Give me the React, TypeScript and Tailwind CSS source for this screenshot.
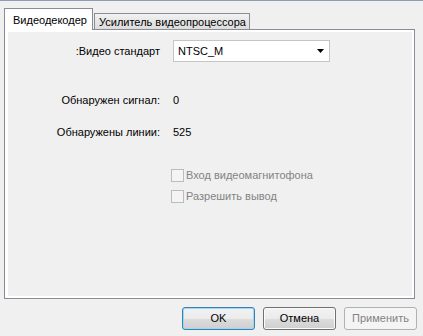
import React from 'react';

const font = { fontFamily: '"Liberation Sans", Arial, sans-serif' };

function CheckRow({ label, className }: { label: string; className?: string }) {
  return (
    <div className={`flex items-center h-[14px] pl-[163px] ${className || ''}`}>
      <span className="w-[13px] h-[13px] border border-[#bcbcbc] bg-[#f4f4f4] shrink-0" />
      <span className="ml-[2px] text-[#838383]">{label}</span>
    </div>
  );
}

export default function App() {
  return (
    <div className="w-[423px] h-[336px] bg-[#f0f0f0] border-t border-[#8e9bb0] text-[11px] leading-none text-black overflow-hidden whitespace-nowrap" style={font}>
      <div className="pt-[7px] pl-[4px]">
        {/* Tabs */}
        <div className="flex items-end h-[21px]">
          <div className="relative z-10 w-[89px] h-[22px] -mb-px bg-white border border-b-0 border-[#898c95] pl-[8px] pt-[6px]">
            Видеодекодер
          </div>
          <div className="w-[156px] h-[16px] ml-px bg-[linear-gradient(#f2f2f2,#e6e6e6_50%,#dcdcdc)] border border-b-0 border-[#898c95] pl-[4px] pt-[3px]">
            Усилитель видеопроцессора
          </div>
        </div>

        {/* Panel */}
        <div className="w-[411px] h-[270px] border border-[#898c95] bg-white pl-[3px] pt-[2px] pr-[2px] pb-[2px]">
          <div className="h-full bg-[#f0f0f0] flex flex-col">
            <div className="flex items-center mt-[8px] h-[22px]">
              <span className="w-[152px] text-right pt-[1px]">:Видео стандарт</span>
              <div className="ml-[13px] w-[157px] h-[22px] bg-white border border-[#c5c5c5] flex items-center justify-between pl-[4px] pr-[5px]">
                <span>NTSC_M</span>
                <svg width="7" height="4" viewBox="0 0 7 4">
                  <path d="M0 0h7L3.5 4z" fill="#000" />
                </svg>
              </div>
            </div>
            <div className="flex items-center mt-[30px] h-[16px]">
              <span className="w-[152px] text-right">Обнаружен сигнал:</span>
              <span className="ml-[13px]">0</span>
            </div>
            <div className="flex items-center mt-[16px] h-[16px]">
              <span className="w-[152px] text-right">Обнаружены линии:</span>
              <span className="ml-[13px]">525</span>
            </div>
            <CheckRow label="Вход видеомагнитофона" className="mt-[28px]" />
            <CheckRow label="Разрешить вывод" className="mt-[7px]" />
          </div>
        </div>
      </div>

      {/* Buttons */}
      <div className="flex justify-end gap-[8px] pr-[6px] mt-[8px]">
        <button className="w-[73px] h-[23px] rounded-[3px] border border-[#3c7fb1] shadow-[inset_0_0_0_1px_#9fd8f5] bg-[linear-gradient(#f2f2f2,#ebebeb_50%,#dddddd_50%,#cfcfcf)]">
          OK
        </button>
        <button className="w-[73px] h-[23px] rounded-[3px] border border-[#707070] shadow-[inset_0_0_0_1px_#fbfbfb] bg-[linear-gradient(#f2f2f2,#ebebeb_50%,#dddddd_50%,#cfcfcf)]">
          Отмена
        </button>
        <button className="w-[73px] h-[23px] rounded-[3px] border border-[#adb2b5] bg-[#f4f4f4] text-[#838383]">
          Применить
        </button>
      </div>
    </div>
  );
}
